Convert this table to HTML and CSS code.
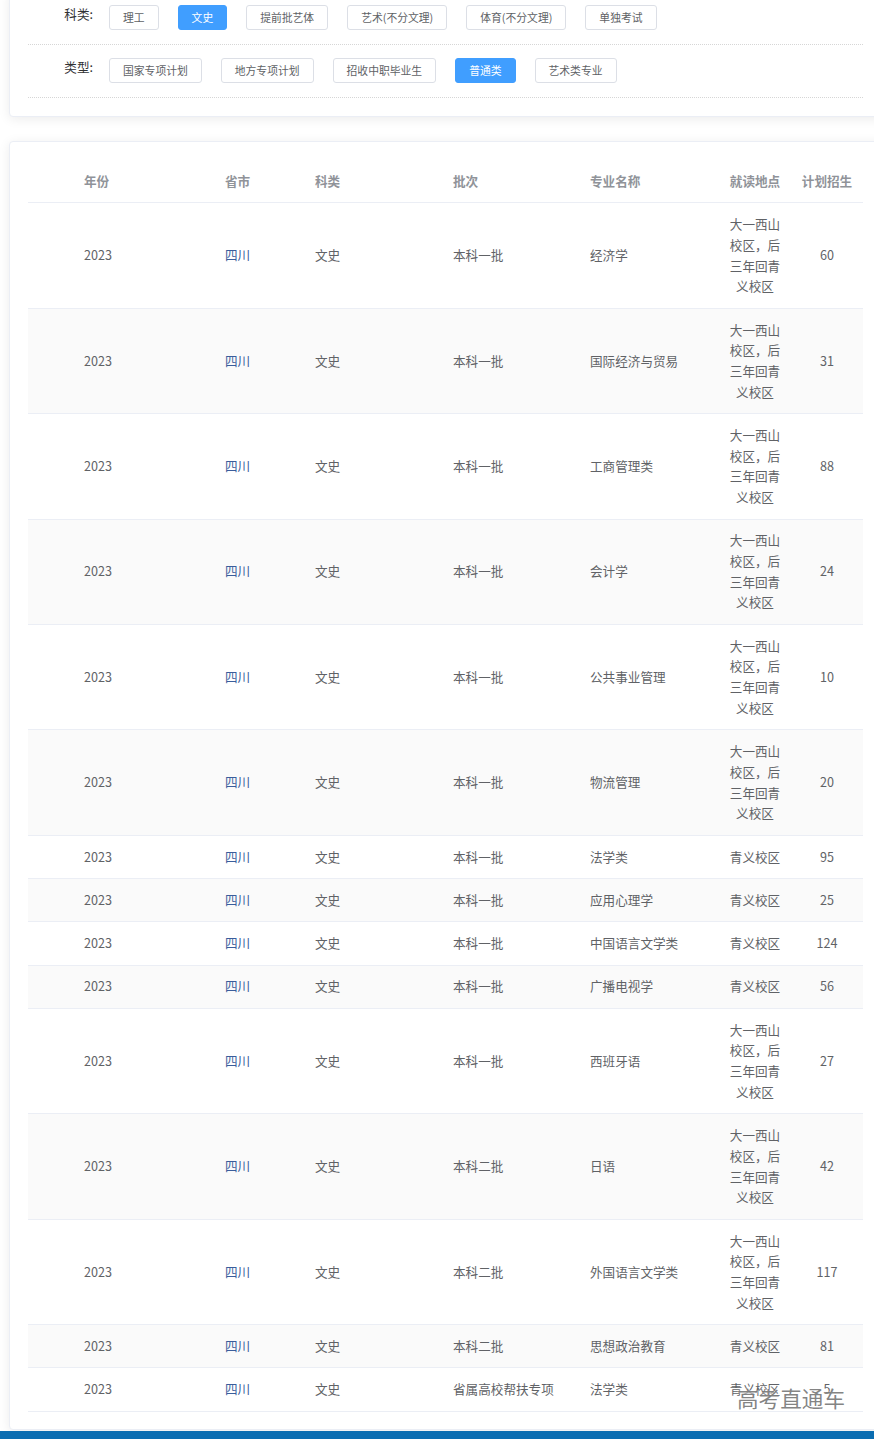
FILE: index.html
```html
<!DOCTYPE html>
<html lang="zh">
<head>
<meta charset="utf-8">
<title>招生计划</title>
<link rel="stylesheet" href="styles.css">
</head>
<body>
<div class="page">
  <div class="card filter-card">
    <div class="filter-row">
      <div class="filter-label">科类:</div>
      <div class="filter-options">
        <span class="btn">理工</span>
        <span class="btn active">文史</span>
        <span class="btn">提前批艺体</span>
        <span class="btn">艺术(不分文理)</span>
        <span class="btn">体育(不分文理)</span>
        <span class="btn">单独考试</span>
      </div>
    </div>
    <div class="filter-row">
      <div class="filter-label">类型:</div>
      <div class="filter-options">
        <span class="btn">国家专项计划</span>
        <span class="btn">地方专项计划</span>
        <span class="btn">招收中职毕业生</span>
        <span class="btn active">普通类</span>
        <span class="btn">艺术类专业</span>
      </div>
    </div>
  </div>

  <div class="card table-card">
    <table class="plan-table">
      <colgroup>
        <col class="c-year"><col class="c-prov"><col class="c-kind"><col class="c-batch"><col class="c-major"><col class="c-place"><col class="c-num">
      </colgroup>
      <thead>
        <tr><th class="first">年份</th><th>省市</th><th>科类</th><th>批次</th><th>专业名称</th><th class="center">就读地点</th><th class="center">计划招生</th></tr>
      </thead>
      <tbody>
        <tr><td class="first">2023</td><td class="prov">四川</td><td>文史</td><td>本科一批</td><td>经济学</td><td class="center">大一西山校区，后三年回青义校区</td><td class="center">60</td></tr>
        <tr><td class="first">2023</td><td class="prov">四川</td><td>文史</td><td>本科一批</td><td>国际经济与贸易</td><td class="center">大一西山校区，后三年回青义校区</td><td class="center">31</td></tr>
        <tr><td class="first">2023</td><td class="prov">四川</td><td>文史</td><td>本科一批</td><td>工商管理类</td><td class="center">大一西山校区，后三年回青义校区</td><td class="center">88</td></tr>
        <tr><td class="first">2023</td><td class="prov">四川</td><td>文史</td><td>本科一批</td><td>会计学</td><td class="center">大一西山校区，后三年回青义校区</td><td class="center">24</td></tr>
        <tr><td class="first">2023</td><td class="prov">四川</td><td>文史</td><td>本科一批</td><td>公共事业管理</td><td class="center">大一西山校区，后三年回青义校区</td><td class="center">10</td></tr>
        <tr><td class="first">2023</td><td class="prov">四川</td><td>文史</td><td>本科一批</td><td>物流管理</td><td class="center">大一西山校区，后三年回青义校区</td><td class="center">20</td></tr>
        <tr><td class="first">2023</td><td class="prov">四川</td><td>文史</td><td>本科一批</td><td>法学类</td><td class="center">青义校区</td><td class="center">95</td></tr>
        <tr><td class="first">2023</td><td class="prov">四川</td><td>文史</td><td>本科一批</td><td>应用心理学</td><td class="center">青义校区</td><td class="center">25</td></tr>
        <tr><td class="first">2023</td><td class="prov">四川</td><td>文史</td><td>本科一批</td><td>中国语言文学类</td><td class="center">青义校区</td><td class="center">124</td></tr>
        <tr><td class="first">2023</td><td class="prov">四川</td><td>文史</td><td>本科一批</td><td>广播电视学</td><td class="center">青义校区</td><td class="center">56</td></tr>
        <tr><td class="first">2023</td><td class="prov">四川</td><td>文史</td><td>本科一批</td><td>西班牙语</td><td class="center">大一西山校区，后三年回青义校区</td><td class="center">27</td></tr>
        <tr><td class="first">2023</td><td class="prov">四川</td><td>文史</td><td>本科二批</td><td>日语</td><td class="center">大一西山校区，后三年回青义校区</td><td class="center">42</td></tr>
        <tr><td class="first">2023</td><td class="prov">四川</td><td>文史</td><td>本科二批</td><td>外国语言文学类</td><td class="center">大一西山校区，后三年回青义校区</td><td class="center">117</td></tr>
        <tr><td class="first">2023</td><td class="prov">四川</td><td>文史</td><td>本科二批</td><td>思想政治教育</td><td class="center">青义校区</td><td class="center">81</td></tr>
        <tr><td class="first">2023</td><td class="prov">四川</td><td>文史</td><td>省属高校帮扶专项</td><td>法学类</td><td class="center">青义校区</td><td class="center">5</td></tr>
      </tbody>
    </table>
  </div>
  <div class="footer-bar"></div>
  <div class="watermark">高考直通车</div>
</div>
</body>
</html>
```

FILE: styles.css
```css
html, body {
  margin: 0;
  padding: 0;
  background: #ffffff;
  overflow-x: hidden;
}

body {
  font-family: "Noto Sans CJK SC", "Noto Sans", sans-serif;
  color: #606266;
}

.page {
  position: relative;
  width: 874px;
  overflow: hidden;
  padding-left: 9px;
  box-sizing: border-box;
}

.card {
  width: 880px;
  box-sizing: border-box;
  background: #fff;
  border: 1px solid #ebeef5;
  border-radius: 4px;
  box-shadow: 0 2px 12px 0 rgba(0, 0, 0, 0.08);
}

.filter-card {
  margin-top: -9px;
  padding: 0 18px 18px 18px;
}

.filter-row {
  display: flex;
  align-items: flex-start;
  padding: 13px 0 14px 0;
  border-bottom: 1px dotted #d6d6d6;
  width: 835px;
}

.filter-label {
  width: 65px;
  margin-right: 16px;
  text-align: right;
  font-size: 12.6px;
  line-height: 18px;
  color: #303133;
  flex: none;
}

.filter-options {
  display: flex;
  gap: 19px;
}

.btn {
  display: inline-block;
  padding: 6px 13px;
  font-size: 10.8px;
  line-height: 11px;
  border: 1px solid #dcdfe6;
  border-radius: 3px;
  color: #606266;
  background: #fff;
  white-space: nowrap;
}

.btn.active {
  background: #409eff;
  border-color: #409eff;
  color: #fff;
}

.table-card {
  margin-top: 24px;
  padding: 18px 18px 17px 18px;
}

.plan-table {
  width: 835px;
  table-layout: fixed;
  border-collapse: collapse;
  font-size: 12.6px;
  line-height: 20.7px;
}

.c-year { width: 197px; }
.c-prov { width: 90px; }
.c-kind { width: 138px; }
.c-batch { width: 137px; }
.c-major { width: 129px; }
.c-place { width: 72px; }
.c-num { width: 72px; }

.plan-table th,
.plan-table td {
  padding: 10.8px 0;
  text-align: left;
  vertical-align: middle;
  border-bottom: 1px solid #ebeef5;
}

.plan-table th {
  color: #909399;
  font-weight: bold;
}

.plan-table td {
  color: #606266;
}

.plan-table .first {
  padding-left: 56px;
}

.plan-table .center {
  text-align: center;
  padding-left: 9px;
  padding-right: 9px;
}

.plan-table td.prov {
  color: #3a5d9c;
}

.plan-table tbody tr:nth-child(even) td {
  background: #fafafa;
}

.footer-bar {
  margin-top: 1px;
  margin-left: -9px;
  width: 874px;
  height: 20px;
  background: #0b6db1;
}

.watermark {
  position: absolute;
  left: 737px;
  top: 1385px;
  font-size: 21.6px;
  line-height: 26px;
  color: rgba(110, 110, 110, 0.85);
  text-shadow: 0 0 2px #fff;
  letter-spacing: 0;
}
```
